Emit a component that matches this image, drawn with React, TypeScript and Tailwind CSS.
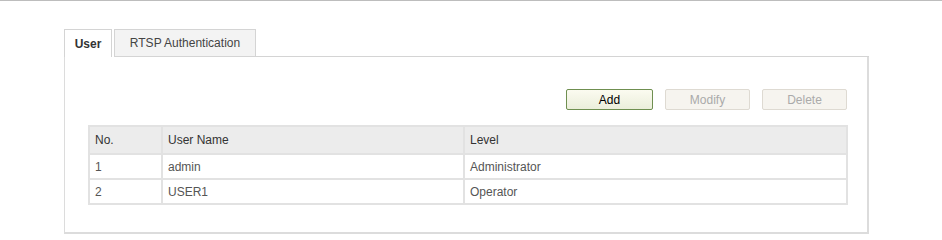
import React from 'react';

const users = [
  { no: 1, name: 'admin', level: 'Administrator' },
  { no: 2, name: 'USER1', level: 'Operator' },
];

const App = () => {
  return (
    <div className="min-h-[240px] bg-white border-t border-[#bdbdbd] text-[12px] text-[#333]" style={{ fontFamily: '"Liberation Sans", Arial, sans-serif' }}>
      <div className="ml-[64px] mt-[28px] w-[805px]">
        {/* Tabs */}
        <div className="flex h-[28px] items-stretch">
          <div className="flex w-[48px] items-center justify-center border border-b-0 border-[#d4d4d4] bg-white font-bold text-[#333]">
            User
          </div>
          <div className="ml-[2px] flex w-[142px] items-center justify-center border border-[#d4d4d4] bg-[#f3f3f3] text-[#444]">
            RTSP Authentication
          </div>
          <div className="flex-1 border-b border-[#d4d4d4]" />
        </div>

        {/* Panel */}
        <div className="border border-t-0 border-r-2 border-b-2 border-[#dcdcdc] px-[20px] pt-[32px] pb-[27px]">
          <div className="flex justify-end gap-[12px]">
            <button className="h-[21px] w-[87px] rounded-[2px] border border-[#6f8f50] bg-gradient-to-b from-[#fbfbf0] to-[#ebeedb] text-[12px] text-black">
              Add
            </button>
            <button className="h-[21px] w-[85px] rounded-[2px] border border-[#dedad2] bg-[#f6f4ef] text-[12px] text-[#aaa]">
              Modify
            </button>
            <button className="h-[21px] w-[85px] rounded-[2px] border border-[#dedad2] bg-[#f6f4ef] text-[12px] text-[#aaa]">
              Delete
            </button>
          </div>

          <table className="mt-[15px] ml-[3px] w-[760px] border-collapse">
            <thead>
              <tr className="h-[28px] bg-[#ececec] text-left">
                <th className="w-[73px] border-2 border-[#e2e2e2] pl-[5px] font-normal text-[#333]">No.</th>
                <th className="w-[302px] border-2 border-[#e2e2e2] pl-[5px] font-normal text-[#333]">User Name</th>
                <th className="border-2 border-[#e2e2e2] pl-[5px] font-normal text-[#333]">Level</th>
              </tr>
            </thead>
            <tbody>
              {users.map((u) => (
                <tr key={u.no} className="h-[25px] text-[#555]">
                  <td className="border-2 border-[#e2e2e2] pl-[5px]">{u.no}</td>
                  <td className="border-2 border-[#e2e2e2] pl-[5px]">{u.name}</td>
                  <td className="border-2 border-[#e2e2e2] pl-[5px]">{u.level}</td>
                </tr>
              ))}
            </tbody>
          </table>
        </div>
      </div>
    </div>
  );
};

export default App;
